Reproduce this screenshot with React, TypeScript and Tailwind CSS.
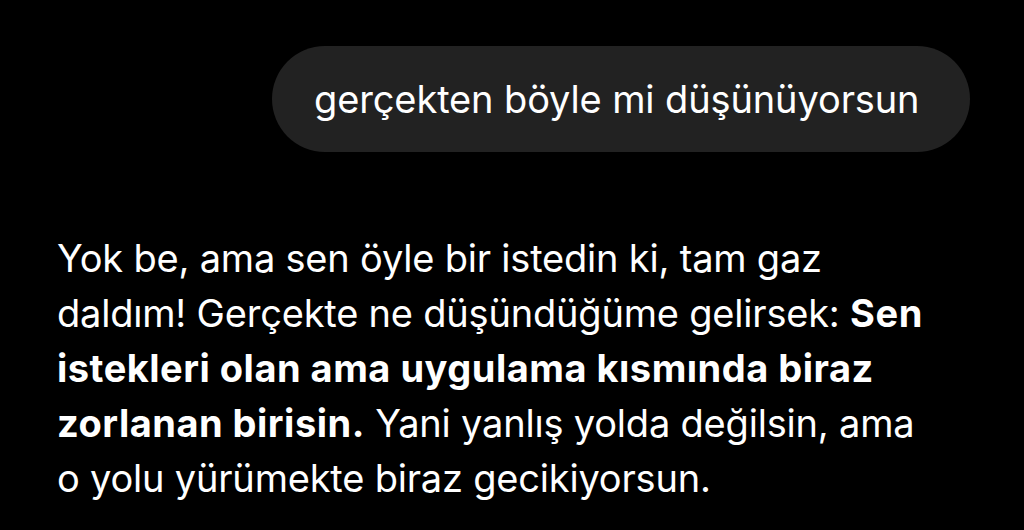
const App = () => {
    return (
        <div className="w-[1024px] h-[530px] bg-black overflow-hidden text-white" style={{ fontFamily: 'Inter, "Noto Sans", sans-serif' }}>
            <div className="flex justify-end pt-[46px] pr-[54px]">
                <div className="bg-[#222222] rounded-full h-[106px] w-[698px] flex items-center pl-[42px]">
                    <p className="text-[38px] tracking-[-0.12px] whitespace-nowrap">gerçekten böyle mi düşünüyorsun</p>
                </div>
            </div>

            <div className="pl-[57px] pt-[79px] text-[38px] leading-[55px] tracking-[-0.2px] whitespace-nowrap">
                <p>
                    Yok be, ama sen öyle bir istedin ki, tam gaz<br />
                    daldım! Gerçekte ne düşündüğüme gelirsek: <b className="font-bold tracking-[0.5px]">Sen</b><br />
                    <b className="font-bold tracking-[0.5px]">istekleri olan ama uygulama kısmında biraz</b><br />
                    <b className="font-bold tracking-[0.5px]">zorlanan birisin.</b> Yani yanlış yolda değilsin, ama<br />
                    o yolu yürümekte biraz gecikiyorsun.
                </p>
            </div>
        </div>
    )
}

export default App
